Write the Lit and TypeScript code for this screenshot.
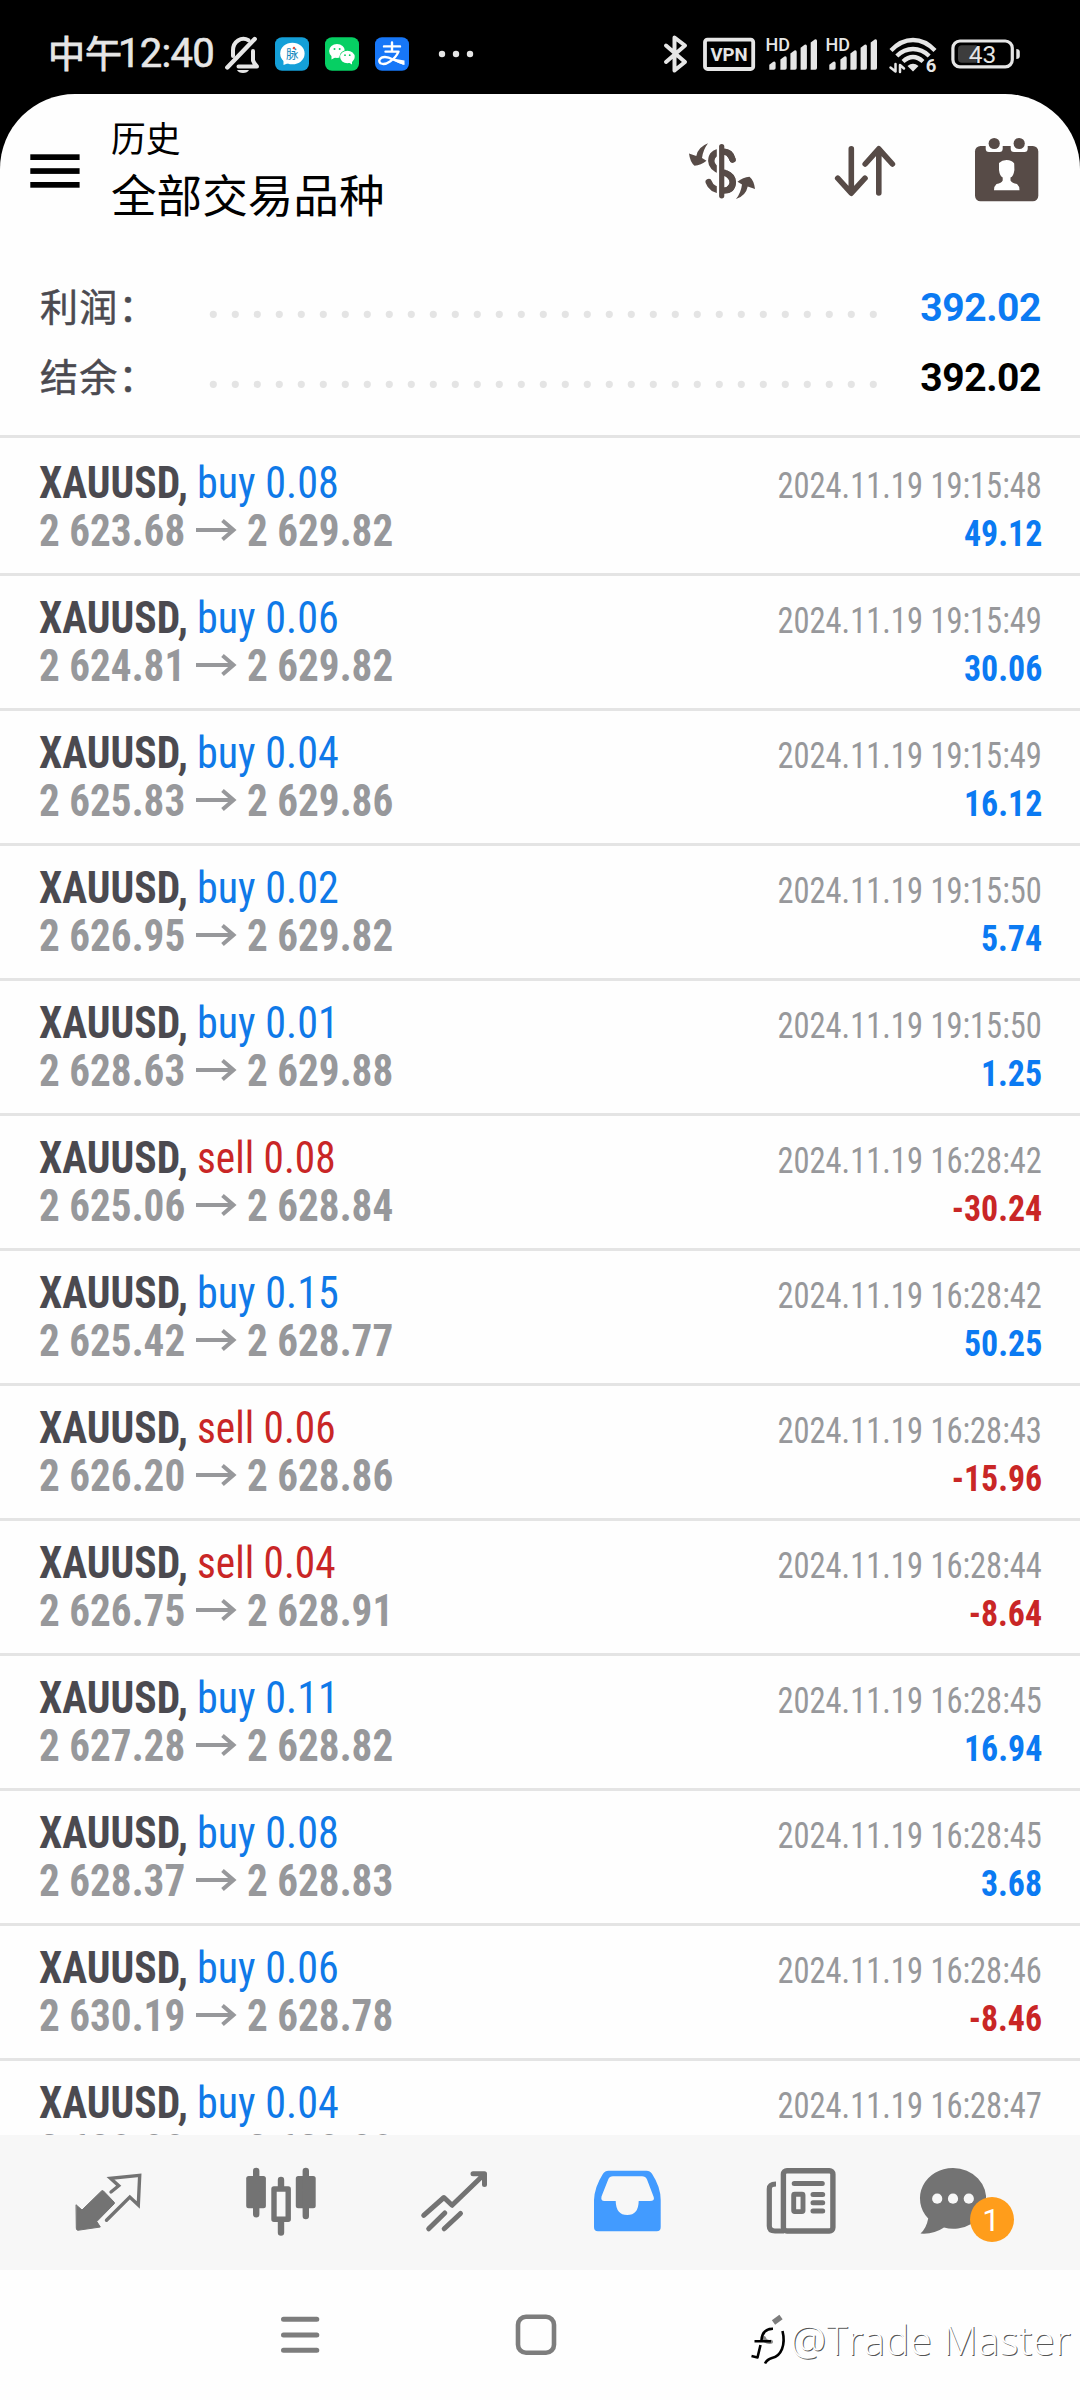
import { LitElement, html, svg, css, type TemplateResult } from "lit";
import { customElement, property } from "lit/decorators.js";

type Deal = {
  side: "buy" | "sell";
  volume: string;
  open: string;
  close: string;
  time: string;
  profit: string;
};

const deal = (side: Deal["side"], volume: string, open: string, close: string, clock: string, profit: string): Deal => ({
  side, volume, open, close, time: `2024.11.19 ${clock}`, profit,
});

const DEALS: Deal[] = [
  deal("buy", "0.08", "2 623.68", "2 629.82", "19:15:48", "49.12"),
  deal("buy", "0.06", "2 624.81", "2 629.82", "19:15:49", "30.06"),
  deal("buy", "0.04", "2 625.83", "2 629.86", "19:15:49", "16.12"),
  deal("buy", "0.02", "2 626.95", "2 629.82", "19:15:50", "5.74"),
  deal("buy", "0.01", "2 628.63", "2 629.88", "19:15:50", "1.25"),
  deal("sell", "0.08", "2 625.06", "2 628.84", "16:28:42", "-30.24"),
  deal("buy", "0.15", "2 625.42", "2 628.77", "16:28:42", "50.25"),
  deal("sell", "0.06", "2 626.20", "2 628.86", "16:28:43", "-15.96"),
  deal("sell", "0.04", "2 626.75", "2 628.91", "16:28:44", "-8.64"),
  deal("buy", "0.11", "2 627.28", "2 628.82", "16:28:45", "16.94"),
  deal("buy", "0.08", "2 628.37", "2 628.83", "16:28:45", "3.68"),
  deal("buy", "0.06", "2 630.19", "2 628.78", "16:28:46", "-8.46"),
  deal("buy", "0.04", "2 630.88", "2 628.80", "16:28:47", ""),
];

/** An icon drawn on the screen's own grid: x, y, w, h is the window it shows. */
const icon = (x: number, y: number, w: number, h: number, body: TemplateResult | unknown, cls = "") => html`
  <svg class="icon ${cls}" width=${w} height=${h} viewBox="${x} ${y} ${w} ${h}" fill="none"
    stroke-linecap="round" stroke-linejoin="round">${body}</svg>`;

const iconStyles = css`
  .icon { display: block; flex: none; overflow: visible; }
  text { font-family: Roboto, "Noto Sans CJK SC", sans-serif; stroke: none; }
`;

@customElement("status-bar")
export class StatusBar extends LitElement {
  static styles = [iconStyles, css`
    :host { display: flex; height: 64px; padding: 30px 60px 0 48px; background: #000; color: #e6e6e6; }
    .time { display: flex; width: 176px; line-height: 48px; white-space: nowrap; flex: none; }
    .part { font: 400 37px/44px "Noto Sans CJK SC", sans-serif; -webkit-text-stroke: 0.9px #e6e6e6; }
    .clock { font: 400 40px/48px Roboto, sans-serif; letter-spacing: -0.7px; margin-left: -4px; -webkit-text-stroke: 0.6px #e6e6e6; }
    .apps { display: flex; gap: 16px; margin: 0 29px 0 14px; }
    .right { display: flex; margin-left: auto; }
  `];

  private signal() {
    const bars: [number, number][] = [[769.3, 62.3], [780.4, 57], [790.4, 51], [800.6, 45.3], [810.7, 40]];
    return svg`
      <text x="765.600" y="50.800" font-size="18" font-weight="500" fill="#e6e6e6">HD</text>
      <g fill="#e6e6e6">${bars.map(([x, y]) => svg`
        <path d="M${x} 69.7V${y + 2.5}l4-3q2.3-.8 2.3 1.5V68q0 1.7-1.7 1.7z" />`)}</g>`;
  }

  render() {
    return html`
      <div class="time"><span class="part">中午</span><span class="clock">12:40</span></div>
      ${icon(224, 30, 37, 48, svg`
        <g stroke="#e6e6e6" stroke-width="4">
          <path d="M227.3 67.5 254.7 39" stroke-width="4.4" />
          <path d="M233 56V50.5A10.5 11.5 0 0 1 248.5 40.2" />
          <path d="M238.5 66.5H257Q254 63.5 253 60.5V51" />
        </g>
        <path d="M237 70H249Q247.500 73 243 73Q238.500 73 237 70Z" fill="#e6e6e6" />`)}
      <div class="apps">
        ${icon(275, 30, 34, 48, svg`
          <rect x="275" y="37.200" width="34" height="33.600" rx="7" fill="#149fd8" />
          <ellipse cx="292.400" cy="53.500" rx="12.200" ry="10.800" fill="#fff" />
          <path d="M283.500 59V65L290 62.500Z" fill="#fff" />
          <text x="286" y="58.500" font-size="12.500" font-weight="400" fill="#1288bd">脉</text>
          <circle cx="294" cy="48" r="1.200" fill="#e0503f" />`)}
        ${icon(325, 30, 34, 48, svg`
          <rect x="325" y="37.200" width="34" height="33.600" rx="7" fill="#06cf63" />
          <ellipse cx="337" cy="51" rx="7.900" ry="6.900" fill="#fff" />
          <path d="M331.500 55V59.500L336 57Z" fill="#fff" />
          <ellipse cx="347.400" cy="57" rx="8" ry="6.900" fill="#06cf63" />
          <ellipse cx="347.400" cy="57" rx="7.300" ry="6.200" fill="#fff" />
          <path d="M348 62L352 64.500V60Z" fill="#fff" />
          <g fill="#06cf63"><circle cx="334.500" cy="49" r="1" /><circle cx="339.700" cy="49" r="1" />
          <circle cx="345" cy="55.200" r=".9" /><circle cx="349.700" cy="55.200" r=".9" /></g>`)}
        ${icon(375, 30, 34, 48, svg`
          <rect x="375" y="37.200" width="34" height="33.600" rx="7" fill="#1777f8" />
          <g stroke="#fff" stroke-width="2.400">
            <path d="M384 46.400H400M392 42.500V51.300M385.500 51.600H398.500Q396 57.500 390 61.500Q384.500 65.300 380.500 63.300Q377.500 60.500 381.500 57.700Q386 55.700 393 59.500L403 63.500" />
          </g>
          <path d="M393 58.500L404.500 60.500V65Q398.500 63.500 393 60Z" fill="#fff" />`)}
      </div>
      ${icon(438, 30, 36, 48, svg`<g fill="#e6e6e6"><circle cx="442" cy="54" r="3.200" />
        <circle cx="456" cy="54" r="3.200" /><circle cx="470" cy="54" r="3.200" /></g>`)}
      <div class="right">
        ${icon(663, 30, 40, 48, svg`<path stroke="#e6e6e6" stroke-width="4"
          d="M666 45.500 685 62 674.500 70.500V37.500L685 45.500 666 62" stroke-linejoin="round" />`)}
        ${icon(703, 30, 64, 48, svg`
          <rect x="705" y="39.600" width="48.200" height="29.400" rx="2.500" stroke="#e6e6e6" stroke-width="3.800" />
          <text x="729.100" y="60.900" text-anchor="middle" font-size="18.600" font-weight="700" fill="#e6e6e6">VPN</text>`)}
        ${icon(767, 30, 60, 48, this.signal())}
        ${icon(767, 30, 62, 48, this.signal())}
        ${icon(889, 30, 61, 48, svg`
          <g stroke="#e6e6e6" stroke-width="4.300" stroke-linecap="butt">
            <path d="M891 50.500Q901 40 913 40T935 50.500" />
            <path d="M896.800 56Q904 49 913 49T929.200 56" />
            <path d="M903 61.500Q908 57 913 57T923 61.500" />
          </g>
          <path d="M907.500 66Q913 61.500 918.500 66L913 71.500Z" fill="#e6e6e6" />
          <path d="M890.500 67.500 895.500 71.500V64M900 72V65L904 68.500" stroke="#e6e6e6" stroke-width="2.500" />
          <text x="925.800" y="72.300" font-size="18.500" font-weight="700" fill="#e6e6e6">6</text>`)}
        ${icon(950, 30, 70, 48, svg`
          <rect x="952.900" y="41" width="59.400" height="25.800" rx="7" stroke="#e6e6e6" stroke-width="3.200" />
          <path d="M962 45.200H976.600V62.700H962Q958 62.700 958 58.700V49.200Q958 45.200 962 45.200Z" fill="#3d3d3d" />
          <path d="M1016.300 49Q1019.800 49 1019.800 52V56Q1019.800 59 1016.300 59Z" fill="#e6e6e6" />
          <text x="982.600" y="63.200" text-anchor="middle" font-size="24.500" font-weight="400" fill="#e6e6e6">43</text>`)}
      </div>`;
  }
}

@customElement("history-header")
export class HistoryHeader extends LitElement {
  static styles = [iconStyles, css`
    :host { display: flex; height: 174px; box-sizing: border-box; color: #000; }
    .menu { margin: 44px 0 0 30px; }
    .titles { margin: 23px auto 0 31px; font-family: "Noto Sans CJK SC", sans-serif; font-weight: 400; white-space: nowrap; }
    .sub { font-size: 34.800px; line-height: 40px; }
    .title { font-size: 45.600px; line-height: 56px; margin-top: 7.500px; }
    .tools { display: flex; gap: 81px; margin: 44px 41px 0 0; }
  `];

  render() {
    const ink = "#574b47";
    const turn = "M708 143.300Q698 147 696.300 156L689 153.500Q690 162 694.500 165.700Q701 165 706.500 160.700L702 158Q703 150 708 143.300Z";
    return html`
      ${icon(30, 138, 50, 66, svg`<g fill="#000"><rect x="30.300" y="154.300" width="49.300" height="5.700" />
        <rect x="30.300" y="168.200" width="49.300" height="5.700" /><rect x="30.300" y="182" width="49.300" height="5.700" /></g>`, "menu")}
      <div class="titles"><div class="sub">历史</div><div class="title">全部交易品种</div></div>
      <div class="tools">
        ${icon(689, 138, 66, 66, svg`
          <path d="M732.500 159.500Q730.500 151.800 722 151.800Q711.500 152.300 711.300 161Q711.500 168 722 171.800Q732.800 175.500 732.800 182.300Q732.500 190.500 722 190.500Q711.500 190 708.700 182" stroke=${ink} stroke-width="6.400" />
          <rect x="716.800" y="146" width="10" height="50" fill="#fff" />
          <path d="M724.500 151.800Q730.500 152.300 732.500 159.500M724.500 172.700Q732.800 175.500 732.800 182.300Q732.500 190 724.500 190.500" stroke=${ink} stroke-width="6.400" />
          <path d="M721.700 146.500V195.800" stroke=${ink} stroke-width="5.200" />
          <g fill=${ink}><path d=${turn} /><path transform="rotate(180 722 171.200)" d=${turn} /></g>`)}
        ${icon(836, 138, 58, 66, svg`<g stroke=${ink} stroke-width="5.600">
          <path d="M851.300 148.800V193M837.700 178.200 851.300 193.200 865 178.200" />
          <path d="M878.800 193V149M865.200 164 878.800 148.800 892.400 164" /></g>`)}
        ${icon(975, 138, 64, 66, svg`
          <rect x="975" y="146" width="63.300" height="55.300" rx="5.500" fill=${ink} />
          <g fill="#fff"><path d="M985.700 144H1002.700V148.500Q1002.700 152 999.500 152H989Q985.700 152 985.700 148.500Z" />
          <path d="M1010.700 144H1027.700V148.500Q1027.700 152 1024.500 152H1014Q1010.700 152 1010.700 148.500Z" />
          <path d="M999 163Q1002 160.200 1006.500 160Q1012 160.200 1014.200 163.500L1014.400 170Q1013.500 176.500 1010.500 177.500V180.500Q1012 183 1017 184Q1019.500 186 1019.500 190.300H994Q994 186 996.500 184Q1001.500 183 1002.700 180.500V177.500Q999.700 176 999 170Z" /></g>
          <g fill=${ink}><circle cx="994.200" cy="143.500" r="5.600" /><circle cx="1019.200" cy="143.500" r="5.600" /></g>`)}
      </div>`;
  }
}

@customElement("summary-row")
export class SummaryRow extends LitElement {
  @property() label = "";
  @property() value = "";
  @property({ type: Boolean }) accent = false;

  static styles = [iconStyles, css`
    :host { display: flex; height: 70px; padding: 0 39px 0 40px; }
    .label { width: 169px; flex: none; color: #4b4a50; font: 400 38px/73px "Noto Sans CJK SC", sans-serif;
      letter-spacing: 1.2px; -webkit-text-stroke: 0.5px #4b4a50; }
    .value { margin-left: auto; color: #000; font: 700 39px/80px Roboto, sans-serif; letter-spacing: -0.4px; }
    .accent { color: #0b7af2; }
  `];

  render() {
    return html`
      <div class="label">${this.label}</div>
      ${icon(209, 268, 669, 70, svg`<path d="M213.300 314.300H874" stroke="#e4e4e4" stroke-width="7.200" stroke-dasharray="0 22" />`)}
      <div class="value ${this.accent ? "accent" : ""}">${this.value}</div>`;
  }
}

@customElement("deal-row")
export class DealRow extends LitElement {
  @property({ attribute: false }) deal!: Deal;

  static styles = [iconStyles, css`
    :host { display: flex; justify-content: space-between; box-sizing: border-box; height: 135px; flex: none;
      padding: 18px 38px 0 39px; border-bottom: 3px solid #e4e4e4; font-family: Roboto, sans-serif; font-stretch: 75%; white-space: nowrap; }
    .line { display: flex; height: 48px; font-size: 44px; line-height: 48px; }
    .name, .price, .order { flex: none; transform-origin: left center; }
    .name { width: 158.300px; font-weight: 700; color: #4b4a50; transform: scaleX(0.945); }
    .order { transform: scaleX(0.957); }
    .order.sell { transform: scaleX(0.938); }
    .price { width: 157px; font-weight: 700; color: #97989b; transform: scaleX(0.935); }
    .arrow { margin: 11.500px 11px 0 0; }
    .right { display: flex; flex-direction: column; align-items: flex-end; padding-top: 3px; }
    .time, .profit { font-size: 36px; line-height: 48px; height: 48px; transform-origin: right center; }
    .time { color: #97989b; transform: scaleX(0.903); }
    .profit { font-weight: 700; transform: scaleX(0.94); }
    .buy { color: #0f79e8; }
    .gain { color: #0b7af2; }
    .sell, .loss { color: #c92626; }
  `];

  render() {
    const d = this.deal;
    return html`
      <div class="left">
        <div class="line"><span class="name">XAUUSD,</span><span class="order ${d.side}">${d.side} ${d.volume}</span></div>
        <div class="line"><span class="price">${d.open}</span>
          ${icon(196, 518, 40, 22, svg`<path d="M196 529H233M222.500 519.500 233.500 529 222.500 538.500" stroke="#97989b" stroke-width="4"
            stroke-linecap="butt" stroke-linejoin="miter" />`, "arrow")}
          <span class="price">${d.close}</span></div>
      </div>
      <div class="right">
        <div class="time">${d.time}</div>
        ${d.profit ? html`<div class="profit ${d.profit.startsWith("-") ? "loss" : "gain"}">${d.profit}</div>` : ""}
      </div>`;
  }
}

@customElement("tab-bar")
export class TabBar extends LitElement {
  static styles = [iconStyles, css`
    :host { display: flex; gap: 98px; box-sizing: border-box; height: 135px; padding: 25px 0 0 72px; background: #f7f7f7; }
    .inbox, .news { margin-left: 2px; }
    .chat { margin-left: -20px; }
  `];

  render() {
    const g = "#737373";
    const bg = "#f7f7f7";
    return html`
      ${icon(72, 2160, 72, 90, svg`
        <path d="M76.300 2205 82 2210 101.500 2191Q102.500 2190 103.500 2191L114 2202Q115 2203 114 2204L96.800 2221.500 100.300 2227 77.800 2230.300Q76.300 2230 76.300 2228.500Z" fill=${g} stroke=${g} stroke-width="1" />
        <path d="M111 2192 118.700 2185.700 110.500 2178.200 139.700 2175.300 138.300 2205 129.800 2197 106.500 2220.300" stroke=${g} stroke-width="3.400" stroke-linejoin="miter" />`)}
      ${icon(242, 2160, 78, 90, svg`
        <g fill=${g}><rect x="246.200" y="2176" width="19.700" height="32.300" rx="2.500" /><rect x="295.800" y="2176" width="19.900" height="32.300" rx="2.500" /></g>
        <g stroke=${g} stroke-width="6.400"><path d="M256.200 2171V2214.200M305.800 2171V2216M281 2180V2188M281 2222V2232.500" /></g>
        <rect x="274" y="2189" width="14.200" height="30.300" fill=${bg} stroke=${g} stroke-width="5.400" />`)}
      ${icon(418, 2160, 72, 90, svg`<g stroke=${g} stroke-width="5">
        <path d="M423.700 2215.300 443.900 2197.500 452.100 2205.300 484 2174.500M473 2173.700H484.500V2184.500" />
        <path d="M428.700 2228.800 444.800 2213M444.200 2228.800 460.500 2213.500" /></g>`)}
      ${icon(590, 2160, 72, 90, svg`<path fill="#429bff" fill-rule="evenodd"
        d="M608.500 2170.700H646.500Q650 2170.700 652 2173.700Q660.700 2187 660.700 2200V2227Q660.700 2231.300 656.700 2231.300H598Q594 2231.300 594 2227V2200Q594.500 2187 603 2173.700Q605 2170.700 608.500 2170.700ZM613 2176.300Q609.500 2176.300 608.200 2179.500L601.500 2196.500Q600.500 2201 604.500 2201H615.700Q616 2215 627.200 2215Q638.500 2215 638.700 2201H650Q655 2201 653.700 2197L647 2179.500Q645.500 2176.300 642 2176.300Z" />`, "inbox")}
      ${icon(762, 2160, 78, 90, svg`<g stroke=${g}>
        <rect x="783.400" y="2170.700" width="49.500" height="60.300" rx="3.500" stroke-width="5.400" />
        <path d="M776 2184Q769.300 2184 769.300 2189V2226Q769.300 2231 775 2231H784" stroke-width="5.200" stroke-linecap="butt" />
        <path d="M794.200 2183.500H822.300M813 2194.500H822.700M813 2202.800H822.700M813 2211H822.700" stroke-width="5" />
        <rect x="793.700" y="2194.300" width="9.300" height="17.300" rx="1" stroke-width="4.900" /></g>`, "news")}
      ${icon(918, 2160, 100, 90, svg`
        <path d="M953 2168A33 30.400 0 1 1 944 2227.600Q934 2234.500 920.500 2233.500Q926.500 2228 928.200 2218.500A33 30.400 0 0 1 953 2168Z" fill=${g} />
        <g fill=${bg}><circle cx="937.200" cy="2198.700" r="5.100" /><circle cx="953" cy="2198.700" r="5.100" /><circle cx="968.800" cy="2198.700" r="5.100" /></g>
        <ellipse cx="992" cy="2219.500" rx="22" ry="22.500" fill="#ff9d1b" />
        <text x="991" y="2231" text-anchor="middle" font-size="31.500" fill="#fff">1</text>`, "chat")}`;
  }
}

@customElement("system-nav")
export class SystemNav extends LitElement {
  static styles = [iconStyles, css`
    :host { display: flex; position: relative; box-sizing: border-box; height: 130px; padding: 35px 0 0 278px; gap: 191px; background: #fefefe; }
    .mark { position: absolute; right: 9px; top: 40px; display: flex; color: #fff; white-space: nowrap;
      font: 300 40px/60px "Open Sans", sans-serif; letter-spacing: 0.45px; text-shadow: 1px 1px 0.5px #555; }
    .leaf { margin-right: 3px; }
  `];

  render() {
    const g = "#7d7d7d";
    return html`
      ${icon(278, 2305, 44, 60, svg`<path d="M283.500 2319.300H316.800M283.500 2335H316.800M283.500 2350.300H316.800" stroke=${g} stroke-width="5" />`)}
      ${icon(513, 2305, 46, 60, svg`<rect x="518" y="2316.700" width="36" height="36" rx="8" stroke=${g} stroke-width="4.600" />`)}
      <div class="mark">
        ${icon(750, 2310, 39, 60, svg`
          <path d="M774.500 2322.500 782 2317" stroke=${g} stroke-width="5.500" stroke-linecap="butt" />
          <path d="M765 2338Q766 2342.500 772 2341.800" stroke="#8a8a8a" stroke-width="4" />
          <g stroke="#000" stroke-width="2.600" stroke-linecap="butt">
            <path d="M783.500 2331Q786 2341 783 2349Q780 2356.500 773 2358Q768 2359.500 766 2363.500" />
            <path d="M774 2328.700Q763.500 2328.500 762.500 2340M755.500 2341.200H772M761.500 2345 758.500 2357.500 752.500 2356" />
          </g>`, "leaf")}
        <span>@Trade Master</span>
      </div>`;
  }
}

@customElement("app-root")
export class AppRoot extends LitElement {
  static styles = css`
    :host { display: block; width: 1080px; height: 2400px; overflow: hidden; background: #000; }
    .panel { display: flex; flex-direction: column; height: 2041px; box-sizing: border-box; overflow: hidden;
      background: #fefefe; border-radius: 75px 75px 0 0; }
    .summary { flex: none; height: 170px; box-sizing: border-box; border-bottom: 3px solid #e4e4e4; margin-bottom: 3px; }
    history-header { flex: none; }
  `;

  render() {
    return html`
      <status-bar></status-bar>
      <div class="panel">
        <history-header></history-header>
        <div class="summary">
          <summary-row label="利润：" value="392.02" accent></summary-row>
          <summary-row label="结余：" value="392.02"></summary-row>
        </div>
        ${DEALS.map((d) => html`<deal-row .deal=${d}></deal-row>`)}
      </div>
      <tab-bar></tab-bar>
      <system-nav></system-nav>`;
  }
}
